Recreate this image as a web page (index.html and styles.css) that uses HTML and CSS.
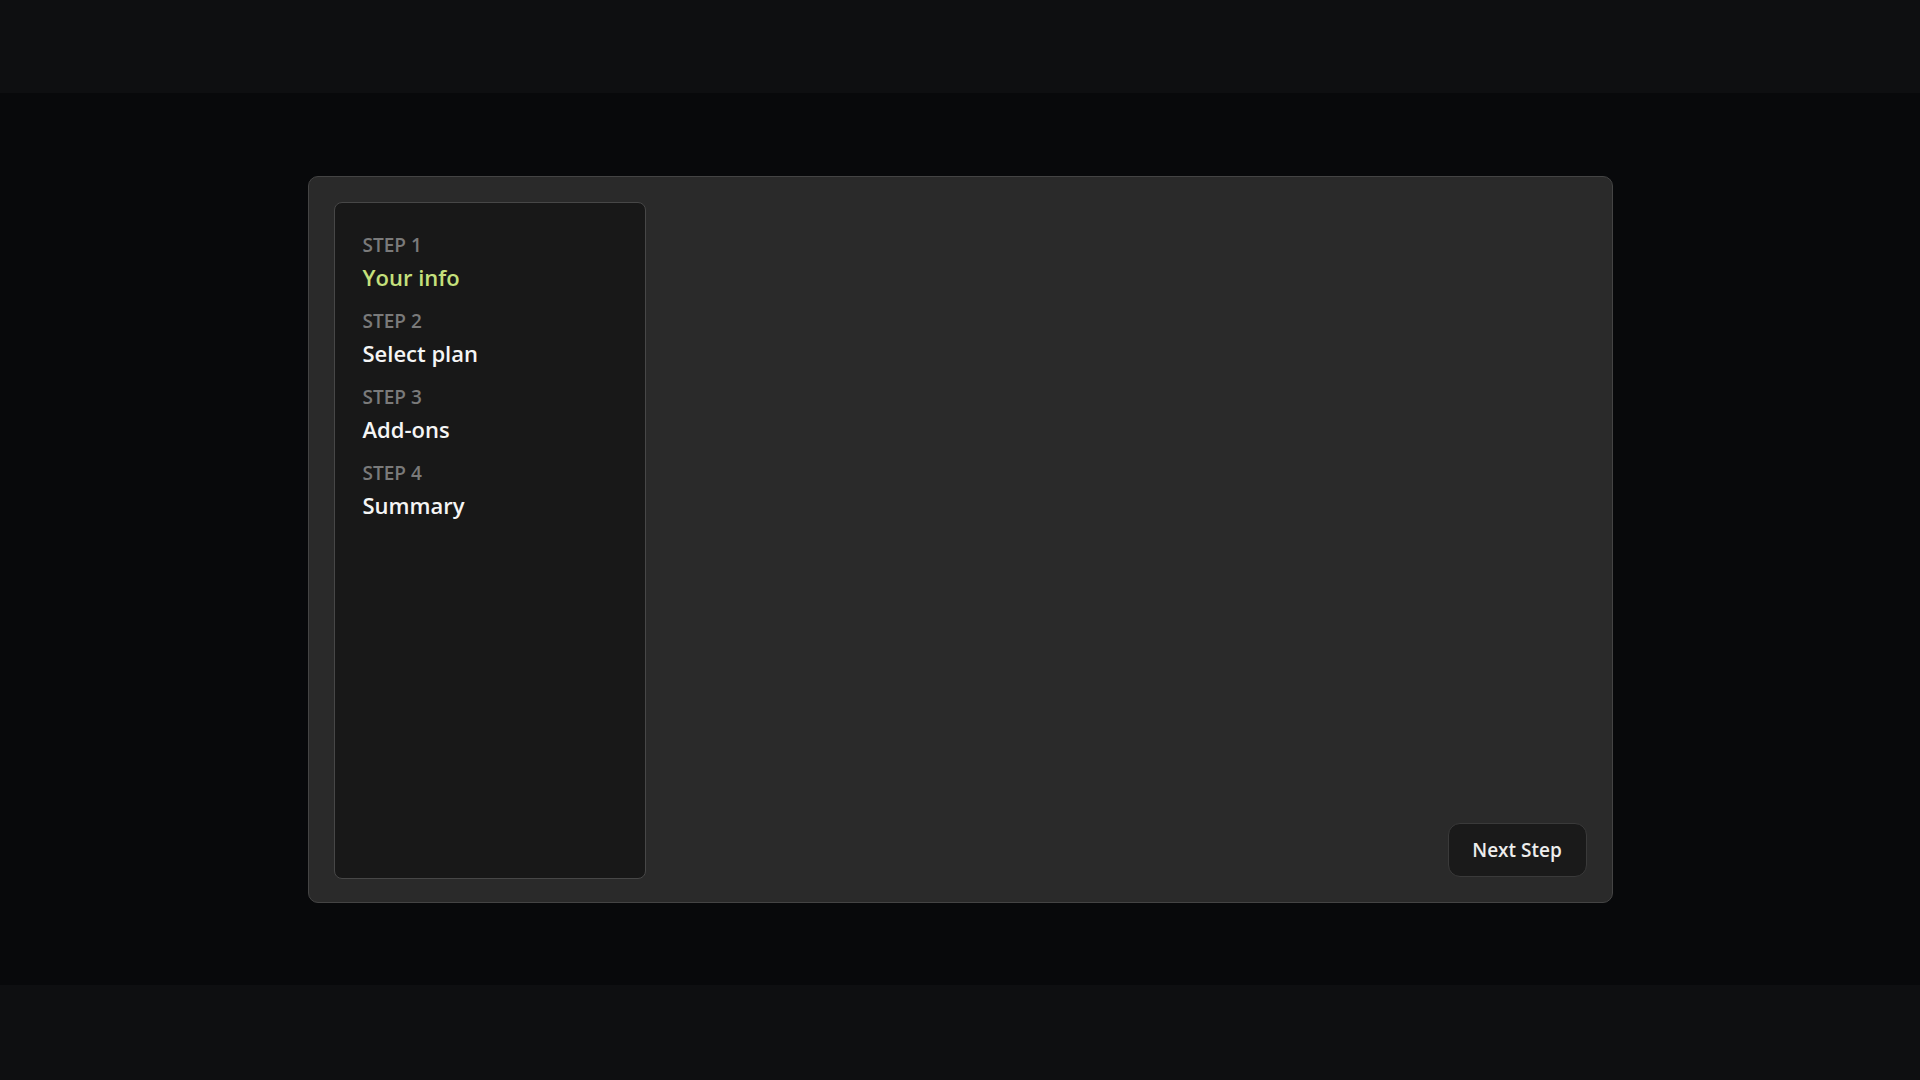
FILE: index.html
```html
<!DOCTYPE html>
<html lang="en">

<head>
    <meta charset="UTF-8">
    <meta name="viewport" content="width=device-width, initial-scale=1.0">
    <title>Multi-step form</title>
    <link rel="stylesheet" href="styles.css">
</head>

<body>
    <div class="band"></div>
    <main class="stage">
        <div class="card">
            <aside class="steps">
                <div class="step">
                    <span class="stepNum">STEP 1</span>
                    <span class="stepName active">Your info</span>
                </div>
                <div class="step">
                    <span class="stepNum">STEP 2</span>
                    <span class="stepName">Select plan</span>
                </div>
                <div class="step">
                    <span class="stepNum">STEP 3</span>
                    <span class="stepName">Add-ons</span>
                </div>
                <div class="step">
                    <span class="stepNum">STEP 4</span>
                    <span class="stepName">Summary</span>
                </div>
            </aside>
            <section class="content">
                <button class="nextBtn">Next Step</button>
            </section>
        </div>
    </main>
    <div class="band"></div>
</body>

</html>
```

FILE: styles.css
```css
* {
    margin: 0;
    box-sizing: border-box;
}

body {
    background: #0e0f11;
    font-family: "Open Sans", "Noto Sans", sans-serif;
    color: #f2f2f2;
}

.band {
    height: 93px;
    background: #0e0f11;
}

.stage {
    height: 892px;
    background: #08090b;
    display: flex;
    align-items: center;
    justify-content: center;
}

.card {
    width: 1305px;
    height: 727px;
    background: #2a2a2a;
    border: 1px solid #444;
    border-radius: 10px;
    padding: 25px 25px 23px;
    display: flex;
    gap: 24px;
}

.steps {
    width: 312px;
    background: #181818;
    border: 1px solid #474747;
    border-radius: 8px;
    padding: 29px 28px;
    display: flex;
    flex-direction: column;
    gap: 15px;
}

.step {
    display: flex;
    flex-direction: column;
    gap: 3px;
}

.stepNum {
    font-size: 19px;
    line-height: 27px;
    font-weight: 600;
    color: #7a7a7a;
}

.stepName {
    font-size: 22px;
    line-height: 31px;
    font-weight: 600;
    color: #f5f5f5;
}

.stepName.active {
    color: #c5e07c;
}

.content {
    flex: 1;
    display: flex;
    align-items: flex-end;
    justify-content: flex-end;
}

.nextBtn {
    width: 139px;
    height: 54px;
    margin-bottom: 2px;
    background: #1a1a1a;
    border: 1px solid #3a3a3a;
    border-radius: 12px;
    font-family: inherit;
    font-size: 19px;
    font-weight: 600;
    color: #ededed;
}
```
